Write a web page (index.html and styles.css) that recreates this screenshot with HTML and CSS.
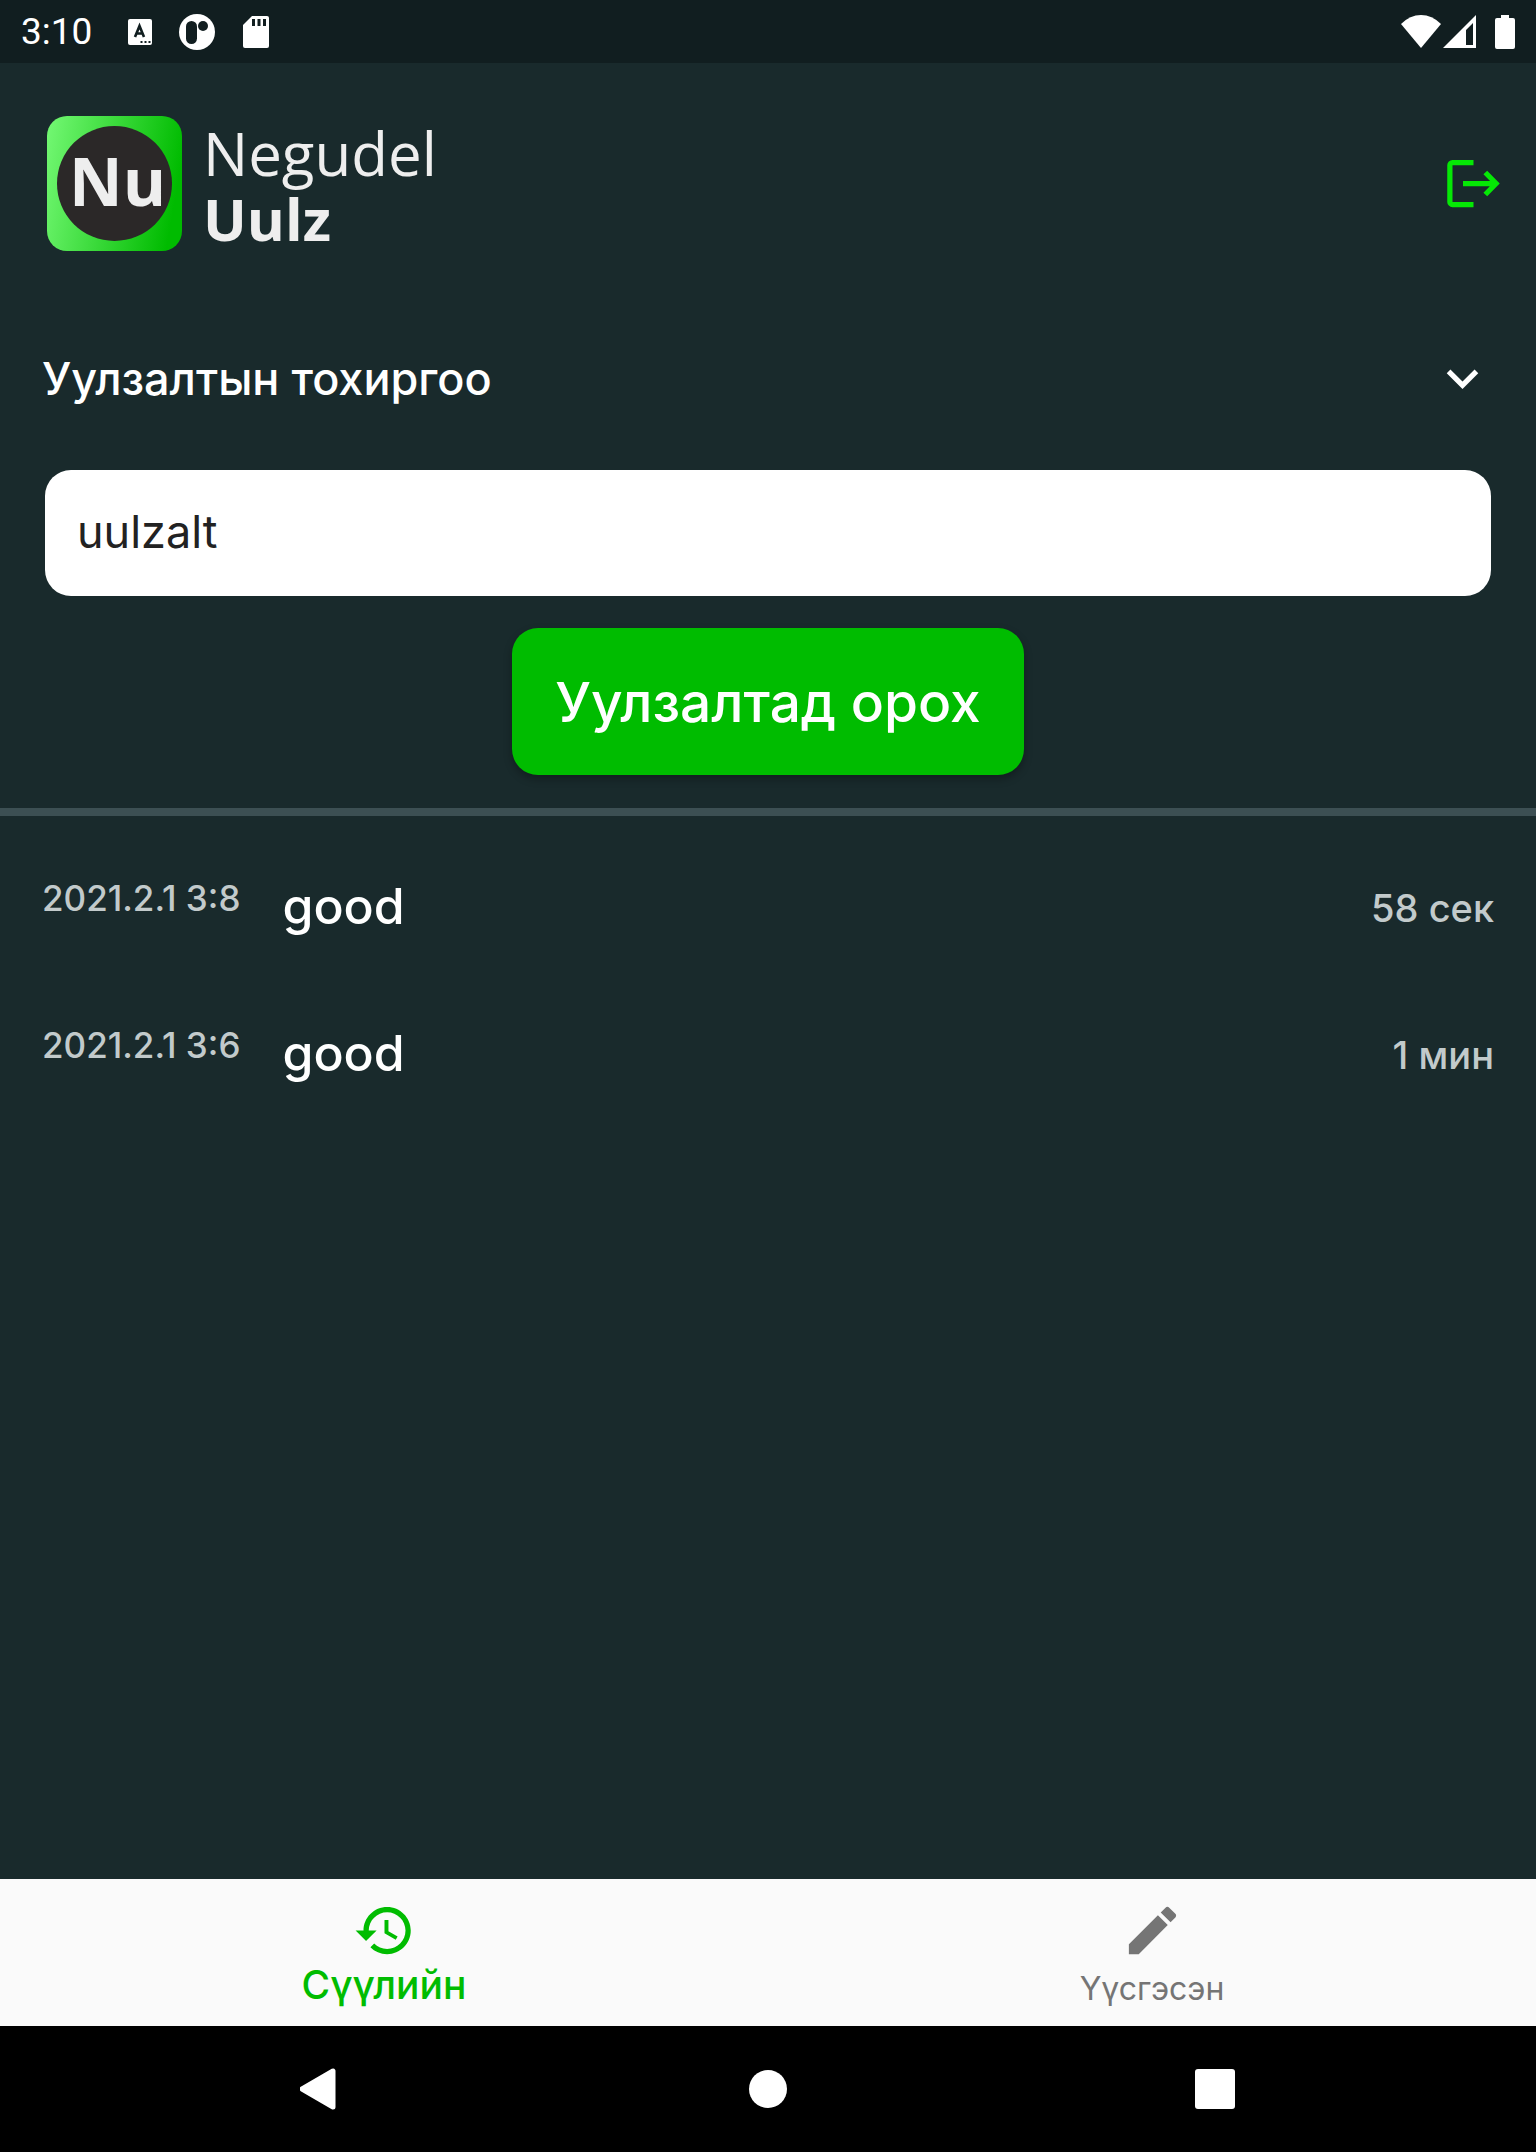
FILE: index.html
```html
<!DOCTYPE html>
<html lang="mn">
<head>
    <meta charset="UTF-8">
    <meta name="viewport" content="width=device-width, initial-scale=1.0">
    <title>Negudel Uulz</title>
    <link rel="stylesheet" href="styles.css">
</head>
<body>
    <div class="status-bar">
        <span class="clock">3:10</span>
        <div class="status-icons">
            <svg width="24" height="28" viewBox="0 0 24 28">
                <rect y="1" width="24" height="26" rx="2" fill="#fff"/>
                <path d="M7 19 L11.500 8 L16 19 M8.500 15.500 H14.500" fill="none" stroke="#111e20" stroke-width="2.600"/>
                <path d="M12.500 23h2v2h-2zM16.500 23h2v2h-2zM20.500 23h2v2h-2z" fill="#111e20"/>
            </svg>
            <svg width="36" height="36" viewBox="0 0 36 36">
                <circle cx="18" cy="18" r="18" fill="#fff"/>
                <rect x="7" y="7" width="11" height="23" rx="5.500" fill="#111e20"/>
                <circle cx="24" cy="12" r="5" fill="#111e20"/>
            </svg>
            <svg width="28" height="34" viewBox="0 0 28 34">
                <path d="M10 1h15a2 2 0 0 1 2 2v28a2 2 0 0 1-2 2H3a2 2 0 0 1-2-2V10z" fill="#fff"/>
                <path d="M10 4h3v7h-3zM15.500 4h3v7h-3zM21 4h3v7h-3z" fill="#111e20"/>
            </svg>
        </div>
        <div class="system-icons">
            <svg width="40" height="34" viewBox="0 0 40 34">
                <path d="M0 9Q9 0 20 0T40 9L20 33z" fill="#fff"/>
            </svg>
            <svg width="34" height="34" viewBox="0 0 34 34">
                <path fill-rule="evenodd" d="M33 0V33H0zM30 8L23 15V30H30z" fill="#fff"/>
            </svg>
            <svg class="battery" width="20" height="34" viewBox="0 0 20 34">
                <path d="M6 0h8v3h4a2 2 0 0 1 2 2v27a2 2 0 0 1-2 2H2a2 2 0 0 1-2-2V5a2 2 0 0 1 2-2h4z" fill="#fff"/>
            </svg>
        </div>
    </div>

    <header class="header">
        <div class="logo">
            <div class="logo-badge"><span class="logo-circle">Nu</span></div>
            <div class="logo-text">
                <span class="logo-light">Negudel</span>
                <span class="logo-bold">Uulz</span>
            </div>
        </div>
        <button type="button" class="logout" aria-label="Гарах">
            <svg class="icon" viewBox="0 0 24 24" fill="none" stroke="#05e805" stroke-width="2">
                <path d="M12 4H4a1 1 0 0 0-1 1v14a1 1 0 0 0 1 1h8"/>
                <path d="M8 12h12.500M16.500 7.800l4.100 4.200-4.100 4.200"/>
            </svg>
        </button>
    </header>

    <form class="join-form">
        <button type="button" class="settings-toggle">
            <span>Уулзалтын тохиргоо</span>
            <svg class="icon" viewBox="0 0 24 24">
                <path d="M16.590 8.590L12 13.170 7.410 8.590 6 10l6 6 6-6z" fill="#fff"/>
            </svg>
        </button>
        <input type="text" class="room-input" aria-label="Уулзалтын нэр" value="uulzalt">
        <button type="button" class="join-btn">Уулзалтад орох</button>
    </form>

    <main class="history">
        <ul class="meetings">
            <li class="meeting">
                <span class="date">2021.2.1 3:8</span>
                <span class="name">good</span>
                <span class="duration">58 сек</span>
            </li>
            <li class="meeting">
                <span class="date">2021.2.1 3:6</span>
                <span class="name">good</span>
                <span class="duration">1 мин</span>
            </li>
        </ul>
    </main>

    <nav class="tabs">
        <button type="button" class="tab active">
            <svg class="icon" viewBox="0 0 24 24" fill="currentColor">
                <path d="M13 3c-4.970 0-9 4.030-9 9H1l3.890 3.890.070.140L9 12H6c0-3.870 3.130-7 7-7s7 3.130 7 7-3.130 7-7 7c-1.930 0-3.680-.790-4.940-2.060l-1.420 1.420C8.270 19.990 10.510 21 13 21c4.970 0 9-4.030 9-9s-4.030-9-9-9zm-1 5v5l4.280 2.540.720-1.210-3.500-2.080V8H12z"/>
            </svg>
            <span>Сүүлийн</span>
        </button>
        <button type="button" class="tab">
            <svg class="icon" viewBox="0 0 24 24" fill="currentColor">
                <path d="M3 17.250V21h3.750L17.810 9.940l-3.750-3.750L3 17.250zM20.710 7.040c.390-.390.390-1.020 0-1.410l-2.340-2.340c-.390-.390-1.020-.390-1.410 0l-1.830 1.830 3.750 3.750 1.830-1.830z"/>
            </svg>
            <span>Үүсгэсэн</span>
        </button>
    </nav>

    <div class="system-nav">
        <button type="button" aria-label="Back">
            <svg width="42" height="42" viewBox="0 0 42 42">
                <path d="M2 21L33 3V39z" fill="#fff" stroke="#fff" stroke-width="5" stroke-linejoin="round"/>
            </svg>
        </button>
        <button type="button" aria-label="Home">
            <svg width="42" height="42" viewBox="0 0 42 42"><circle cx="21" cy="21" r="19" fill="#fff"/></svg>
        </button>
        <button type="button" aria-label="Recent apps">
            <svg width="42" height="42" viewBox="0 0 42 42"><rect x="1" y="1" width="40" height="40" rx="3" fill="#fff"/></svg>
        </button>
    </div>
</body>
</html>
```
FILE: styles.css
```css
* {
    box-sizing: border-box;
}

body {
    margin: 0;
    min-height: 100vh;
    display: flex;
    flex-direction: column;
    background: #192a2c;
    color: #fff;
    font-family: Inter, "Open Sans", sans-serif;
    font-weight: 400;
}

button {
    padding: 0;
    border: none;
    background: none;
    color: inherit;
    font: inherit;
    cursor: pointer;
}

svg {
    display: block;
    flex: none;
}

.icon {
    width: 63px;
    height: 63px;
}

/* status bar */
.status-bar {
    display: flex;
    align-items: center;
    height: 63px;
    padding: 0 21px;
    background: #111e20;
}

.clock {
    font-family: Roboto, sans-serif;
    font-size: 37px;
}

.status-icons {
    display: flex;
    align-items: center;
    gap: 27px;
    margin-left: 36px;
}

.system-icons {
    display: flex;
    gap: 2px;
    margin-left: auto;
}

.battery {
    margin-left: 16px;
}

/* header */
.header {
    display: flex;
    align-items: center;
    justify-content: space-between;
    height: 240px;
    padding: 0 31px 0 47px;
}

.logo {
    display: flex;
    align-items: center;
    gap: 21px;
    color: #eee;
}

.logo-badge {
    display: flex;
    align-items: center;
    justify-content: center;
    width: 135px;
    height: 135px;
    border-radius: 20px;
    background: linear-gradient(100deg, #74f874, #00bb00 90%);
}

.logo-circle {
    width: 115px;
    height: 115px;
    padding-left: 6px;
    border-radius: 50%;
    background: #2b2828;
    font-family: "Open Sans", sans-serif;
    font-size: 66px;
    font-weight: 700;
    line-height: 108px;
    text-align: center;
}

.logo-text {
    display: flex;
    flex-direction: column;
    padding-top: 6px;
    font-family: "Open Sans", sans-serif;
    font-size: 60px;
    line-height: 66px;
}

.logo-bold {
    font-size: 58px;
    font-weight: 700;
}

/* join form */
.join-form {
    display: flex;
    flex-direction: column;
    align-items: center;
    padding: 44px 42px 33px;
    border-bottom: 8px solid #3c4f53;
}

.settings-toggle {
    display: flex;
    align-items: center;
    justify-content: space-between;
    width: 100%;
    margin-bottom: 60px;
    font-size: 45px;
    font-weight: 500;
}

.room-input {
    width: calc(100% - 6px);
    height: 126px;
    margin-bottom: 32px;
    padding: 0 32px 4px;
    border: none;
    border-radius: 26px;
    background: #fff;
    color: #222;
    font: inherit;
    font-size: 45px;
}

.join-btn {
    height: 147px;
    padding: 0 43px;
    border-radius: 26px;
    background: #00bc00;
    box-shadow: 0 4px 8px rgba(0, 0, 0, 0.3);
    font-size: 55px;
    font-weight: 500;
}

/* meeting history */
.history {
    flex: 1;
}

.meetings {
    margin: 0;
    padding: 16px 42px;
    list-style: none;
}

.meeting {
    display: flex;
    align-items: center;
    height: 147px;
}

.date,
.duration {
    color: #c2cacb;
    font-weight: 500;
}

.date {
    padding-bottom: 16px;
    font-size: 35px;
}

.name {
    margin-left: 42px;
    font-size: 50px;
    font-weight: 500;
}

.duration {
    margin-left: auto;
    padding-top: 4px;
    font-size: 38px;
}

/* bottom tabs */
.tabs {
    display: flex;
    height: 147px;
    background: #fafafa;
}

.tab {
    flex: 1;
    display: flex;
    flex-direction: column;
    align-items: center;
    padding-top: 20px;
    color: #757575;
    font-size: 32px;
    line-height: 54px;
}

.tab.active {
    color: #00bc00;
    font-size: 39px;
    font-weight: 500;
    line-height: 46px;
}

/* android navigation */
.system-nav {
    display: flex;
    align-items: center;
    justify-content: center;
    gap: 405px;
    height: 126px;
    background: #000;
}
```
